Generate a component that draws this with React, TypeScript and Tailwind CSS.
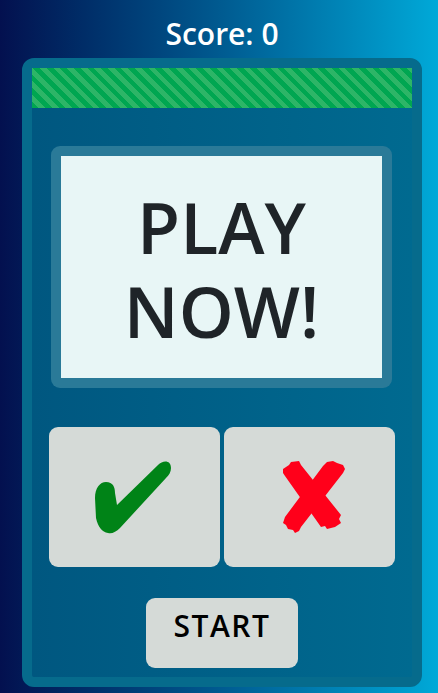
import React from 'react';

const font = { fontFamily: '"Open Sans", "Noto Sans", sans-serif' };

const CheckIcon = () => (
  <svg width="78" height="74" viewBox="0 0 78 74">
    <path
      d="M1 38 C1 28 6 22 12 22 C19 22 21 27 21 33 L23 45 L64 5 C69 0 77 0 77 8 C77 12 75 15 72 18 L26 68 C22 72 18 74 14 73 C8 72 4 67 2 58 Z"
      fill="#008317"
    />
  </svg>
);

const CrossIcon = () => (
  <svg width="66" height="76" viewBox="0 0 66 76">
    <g fill="#ff001a">
      {/* stroke from top-left to bottom-right */}
      <polygon points="2,10 8,6 10,3 18,2 20,6 60,56 58,60 60,64 54,68 46,70 44,67 40,68 4,17 2,14" />
      {/* stroke from bottom-left to top-right */}
      <polygon points="46,3 52,2 56,4 62,6 64,10 62,14 20,68 18,72 14,74 12,71 7,70 5,66 2,64 4,58 42,7" />
    </g>
  </svg>
);

const App = () => {
  return (
    <div className="h-[693px] w-full overflow-hidden pl-[6px] bg-linear-to-r from-[#03104f] via-[#005a90] to-[#00a9d8] flex flex-col items-center" style={font}>
      <h1 className="pt-[14px] text-[30px] leading-[40px] font-semibold text-white">Score: 0</h1>

      <div className="mt-[4px] w-[400px] h-[629px] rounded-[12px] border-[10px] border-[#066b8c] bg-linear-to-r from-[#005780] to-[#006a90] flex flex-col">
        {/* timer bar */}
        <div className="h-[40px] w-full bg-[repeating-linear-gradient(45deg,#00a651_0px,#00a651_4.8px,#2db567_4.8px,#2db567_9.6px)]" />

        {/* display */}
        <div className="mt-[38px] ml-[19px] w-[341px] h-[242px] rounded-[9px] bg-[#2a7a98] p-[10px]">
          <div className="h-full w-full bg-[#e8f6f6] flex flex-col items-center justify-center pt-[4px] text-[70px] leading-[84px] font-semibold text-[#1f2428]">
            <span>PLAY</span>
            <span>NOW!</span>
          </div>
        </div>

        {/* answer buttons */}
        <div className="mt-[39px] ml-[17px] flex gap-[4px]">
          <button className="w-[171px] h-[140px] rounded-[9px] bg-[#d5dad7] flex items-center justify-center pr-[4px]">
            <CheckIcon />
          </button>
          <button className="w-[171px] h-[140px] rounded-[9px] bg-[#d5dad7] flex items-center justify-center pl-[8px]">
            <CrossIcon />
          </button>
        </div>

        <button className="mt-[31px] self-center w-[152px] h-[70px] rounded-[9px] bg-[#d5dad7] pt-[10px] flex justify-center">
          <span className="text-[30px] leading-[36px] font-semibold tracking-[1.5px] text-black">START</span>
        </button>
      </div>
    </div>
  );
};

export default App;
